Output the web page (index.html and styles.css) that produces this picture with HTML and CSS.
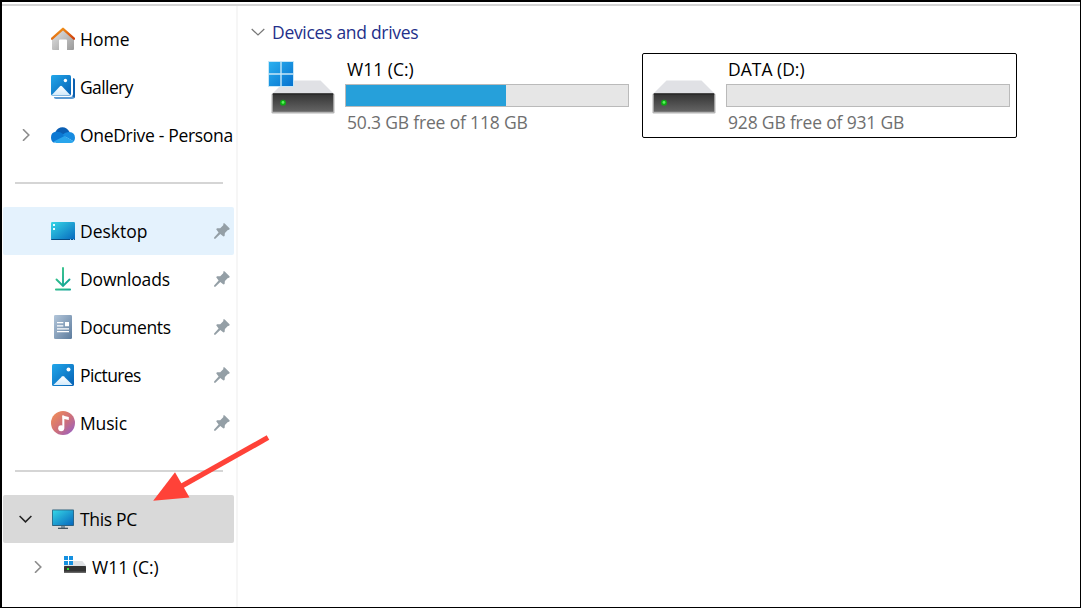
FILE: index.html
```html
<!DOCTYPE html>
<html lang="en">
<head>
  <meta charset="UTF-8">
  <meta name="viewport" content="width=device-width, initial-scale=1.0">
  <title>This PC</title>
  <link rel="stylesheet" href="styles.css">
</head>
<body>

  <!-- shared icons -->
  <svg class="sprite" width="0" height="0" aria-hidden="true">
    <defs>
      <linearGradient id="roof" x1="0" y1="0" x2="1" y2="1">
        <stop offset="0" stop-color="#f7a21b"/>
        <stop offset="1" stop-color="#cf3f0c"/>
      </linearGradient>
      <linearGradient id="wall" x1="0" y1="0" x2="1" y2="1">
        <stop offset="0" stop-color="#e6e6e6"/>
        <stop offset="1" stop-color="#999"/>
      </linearGradient>
      <linearGradient id="blue" x1="0" y1="0" x2="1" y2="1">
        <stop offset="0" stop-color="#22a7ea"/>
        <stop offset="1" stop-color="#0560b4"/>
      </linearGradient>
      <linearGradient id="hill" x1="0" y1="0" x2="0" y2="1">
        <stop offset="0" stop-color="#fff"/>
        <stop offset="1" stop-color="#d4ebfb"/>
      </linearGradient>
      <linearGradient id="screen" x1="0" y1="0" x2="1" y2="1">
        <stop offset="0" stop-color="#35d6e6"/>
        <stop offset="1" stop-color="#0667bd"/>
      </linearGradient>
      <linearGradient id="green" x1="0" y1="0" x2="1" y2="1">
        <stop offset="0" stop-color="#3fca84"/>
        <stop offset="1" stop-color="#0a9f99"/>
      </linearGradient>
      <linearGradient id="paper" x1="0" y1="0" x2="1" y2="1">
        <stop offset="0" stop-color="#b3c6da"/>
        <stop offset="1" stop-color="#5c7b9d"/>
      </linearGradient>
      <linearGradient id="disc" x1="0.1" y1="0.1" x2="0.9" y2="0.9">
        <stop offset="0" stop-color="#ee8a5a"/>
        <stop offset="0.55" stop-color="#cc6f7c"/>
        <stop offset="1" stop-color="#9d62bd"/>
      </linearGradient>
      <linearGradient id="driveFront" x1="0" y1="0" x2="0" y2="1">
        <stop offset="0" stop-color="#333"/>
        <stop offset="1" stop-color="#656565"/>
      </linearGradient>
      <linearGradient id="winTile" x1="0" y1="0" x2="1" y2="1">
        <stop offset="0" stop-color="#2bb0ef"/>
        <stop offset="1" stop-color="#0672cf"/>
      </linearGradient>
    </defs>

    <symbol id="pin" viewBox="0 0 16 16">
      <path d="M9.6.1 10.7.5 15.7 5.5 15.2 6.7 13.9 6.9 10.9 9.9 10.6 13 9.5 13.6 6.3 10.9 1.4 15.7.1 15.8.1 14.4 4.6 9.5 2.2 6.3 3 5.3 6.2 5.2 9.2 2.2Z" fill="#949fa6"/>
    </symbol>

    <symbol id="picture" viewBox="0 0 24 24">
      <rect x="1" y="1" width="22" height="22" rx="1.6" fill="url(#blue)"/>
      <circle cx="17.5" cy="6.5" r="2" fill="#fff"/>
      <path d="M2.4 22.1 11 13.5q1-.9 2 0l8.6 8.6Z" fill="url(#hill)"/>
    </symbol>

    <symbol id="drive" viewBox="0 0 64 34">
      <path d="M14.5.5H49.5L62.5 13.5V15H1.5V13.5Z" fill="#e0e1e5"/>
      <rect x=".5" y="13.5" width="63" height="20" rx="1.2" fill="#b4b4b4"/>
      <rect x="1.8" y="13.6" width="60.4" height="18.2" rx=".6" fill="url(#driveFront)"/>
      <rect x="1.8" y="13.4" width="60.4" height="1.2" fill="#252525"/>
      <circle cx="12" cy="22.7" r="2.9" fill="#0dae13"/>
      <circle cx="12" cy="22.4" r="1.4" fill="#5bf35e"/>
    </symbol>
  </svg>

  <div class="window">
    <div class="topline"></div>

    <div class="explorer">
      <nav class="sidebar">
        <div class="nav-item">
          <span class="expander"></span>
          <svg class="icon" viewBox="0 0 24 24">
            <path d="M1 11.5 12 2 23 11.5V22q0 1-1 1H16V13.5q0-1-1-1H9q-1 0-1 1V23H2q-1 0-1-1Z" fill="url(#wall)"/>
            <path d="M1 11.7 12 1.8 23 11.7" fill="none" stroke="url(#roof)" stroke-width="2.3" stroke-linecap="round" stroke-linejoin="round"/>
          </svg>
          <span class="label">Home</span>
        </div>
        <div class="nav-item">
          <span class="expander"></span>
          <svg class="icon" viewBox="0 0 24 24">
            <path d="M22 3.2q2 .2 2 2V21q0 3-3 3H5q-2 0-2.2-2H19q3 0 3-3Z" fill="#5d9bd3"/>
            <path d="M22 3.2q2 .2 2 2V21q0 1.2-.6 2L21.4 21q.6-.8.6-2Z" fill="#0b60b0"/>
            <rect x="0" y="0" width="20" height="20.5" rx="1.6" fill="url(#blue)"/>
            <circle cx="14.4" cy="5.5" r="1.7" fill="#fff"/>
            <path d="M.8 20 9 11.2q1-.9 2 0L19.2 20Z" fill="url(#hill)"/>
          </svg>
          <span class="label tighter">Gallery</span>
        </div>
        <div class="nav-item">
          <span class="expander">
            <svg class="chevron" viewBox="0 0 12 12"><path d="M3 .2 8.8 6 3 11.8" fill="none" stroke="#8c8c8c" stroke-width="1.6"/></svg>
          </span>
          <svg class="icon" viewBox="0 0 24 24">
            <path d="M4.5 9C6.5 3.2 15.5 2 18.5 9L15 13 6 10Z" fill="#0a5fb4"/>
            <path d="M4.4 8.8Q8.5 8 12 11L15.5 13 3 19.7Q0 18.5 0 14.5 0 9.6 4.4 8.8Z" fill="#0b78d3"/>
            <path d="M18.4 9Q24 9.5 24 15q0 2-1.2 3.4L11.5 12Q14 9 18.4 9Z" fill="#168be0"/>
            <path d="M2.7 18.6 13.5 13 22.9 18.4Q21.5 20 19.5 20H5.5Q3.8 20 2.7 18.6Z" fill="#29a5ec"/>
          </svg>
          <span class="label tight">OneDrive - Persona</span>
        </div>

        <div class="separator"></div>

        <div class="nav-item hovered">
          <span class="expander"></span>
          <svg class="icon" viewBox="0 0 24 24">
            <rect x="0" y="3" width="24" height="18" rx="1.2" fill="url(#screen)"/>
            <path d="M0 20H24Q24 21 23 21H1Q0 21 0 20Z" fill="#074b83"/>
            <path d="M2 5h2v2H2ZM2 9h2v2H2Z" fill="#e5fcff"/>
            <path d="M19 20h1v1h-1ZM22 20h1v1h-1Z" fill="#8ac3e8"/>
          </svg>
          <span class="label">Desktop</span>
          <svg class="pin"><use href="#pin"/></svg>
        </div>
        <div class="nav-item">
          <span class="expander"></span>
          <svg class="icon" viewBox="0 0 24 24">
            <path d="M12 1V18.6M5.5 12.5 12 19 18.5 12.5" fill="none" stroke="url(#green)" stroke-width="1.9" stroke-linecap="round"/>
            <rect x="4" y="21.5" width="16" height="2" rx=".8" fill="url(#green)"/>
          </svg>
          <span class="label snug">Downloads</span>
          <svg class="pin"><use href="#pin"/></svg>
        </div>
        <div class="nav-item">
          <span class="expander"></span>
          <svg class="icon" viewBox="0 0 24 24">
            <rect x="3" y="0" width="18" height="24" rx="1.3" fill="url(#paper)"/>
            <path d="M6 7h6.3v1.3H6ZM6 10.2h6.3v1.3H6ZM14 7h4v4.2h-4ZM6 13.3h12v1.3H6ZM6 16h12v1.3H6Z" fill="#fff"/>
          </svg>
          <span class="label tight">Documents</span>
          <svg class="pin"><use href="#pin"/></svg>
        </div>
        <div class="nav-item">
          <span class="expander"></span>
          <svg class="icon"><use href="#picture"/></svg>
          <span class="label tighter">Pictures</span>
          <svg class="pin"><use href="#pin"/></svg>
        </div>
        <div class="nav-item">
          <span class="expander"></span>
          <svg class="icon" viewBox="0 0 24 24">
            <circle cx="12" cy="12" r="12" fill="url(#disc)"/>
            <path d="M11.3 4.5 17.8 6V9L13.2 8V17.2" fill="#fff"/>
            <circle cx="10.2" cy="17.2" r="3" fill="#fff"/>
            <path d="M11.3 4.5h1.9V17.2h-1.9Z" fill="#fff"/>
          </svg>
          <span class="label snug">Music</span>
          <svg class="pin"><use href="#pin"/></svg>
        </div>

        <div class="separator"></div>

        <div class="nav-item selected">
          <span class="expander">
            <svg class="chevron down" viewBox="0 0 13 8"><path d="M.6 1 6.5 6.9 12.4 1" fill="none" stroke="#222" stroke-width="1.5"/></svg>
          </span>
          <svg class="icon" viewBox="0 0 24 24">
            <rect x="1" y="2.6" width="22" height="16.4" rx=".8" fill="#2e627f"/>
            <rect x="1.8" y="3.4" width="20.4" height="14.6" fill="url(#screen)"/>
            <path d="M10 19h4v2h-4Z" fill="#7e929e"/>
            <path d="M7 20.7H17V22H7Z" fill="#44545f"/>
          </svg>
          <span class="label tight">This PC</span>
        </div>
        <div class="nav-item child">
          <span class="expander">
            <svg class="chevron" viewBox="0 0 12 12"><path d="M3 .2 8.8 6 3 11.8" fill="none" stroke="#8c8c8c" stroke-width="1.6"/></svg>
          </span>
          <svg class="icon" viewBox="0 0 24 24">
            <path d="M10 6H19.3L23 10.5V11H1V9H10Z" fill="#dfe1e4"/>
            <rect x="1" y="11" width="22" height="7" rx=".5" fill="#333"/>
            <rect x="1" y="16.6" width="22" height="1.4" fill="#666"/>
            <rect x="4" y="13" width="2" height="2" fill="#2edc35"/>
            <path d="M1 1h4v4H1ZM6 1h4v4H6ZM1 6h4v4H1ZM6 6h4v4H6Z" fill="#1590e0"/>
          </svg>
          <span class="label">W11 (C:)</span>
        </div>
      </nav>

      <main class="content">
        <h2 class="group-title">
          <svg class="group-chevron" viewBox="0 0 14 8"><path d="M.7 1 7 7 13.3 1" fill="none" stroke="#777" stroke-width="1.2"/></svg>
          <span>Devices and drives</span>
        </h2>

        <div class="drives">
          <div class="drive">
            <svg class="drive-icon" viewBox="0 0 70 56">
              <use href="#drive" x="5" y="20" width="64" height="34"/>
              <rect x="2" y="1" width="26" height="26" fill="#c8e7f7"/>
              <path d="M3 2H14.3V13.3H3ZM15.7 2H27V13.3H15.7ZM3 14.7H14.3V26H3ZM15.7 14.7H27V26H15.7Z" fill="url(#winTile)"/>
            </svg>
            <div class="drive-info">
              <span class="drive-name">W11 (C:)</span>
              <div class="meter"><div class="meter-fill" style="width: 56.8%"></div></div>
              <span class="drive-space">50.3 GB free of 118 GB</span>
            </div>
          </div>
          <div class="drive focused">
            <svg class="drive-icon" viewBox="0 0 70 56">
              <use href="#drive" x="5" y="20" width="64" height="34"/>
            </svg>
            <div class="drive-info">
              <span class="drive-name">DATA (D:)</span>
              <div class="meter"></div>
              <span class="drive-space">928 GB free of 931 GB</span>
            </div>
          </div>
        </div>
      </main>
    </div>

    <!-- red pointer over the This PC row -->
    <svg class="arrow" viewBox="0 0 122 72">
      <path d="M118 5.6 30 55" stroke="#ff4238" stroke-width="5.2" fill="none"/>
      <path d="M3.2 68.7 25 40.2 39.5 65.6Z" fill="#ff4238"/>
    </svg>
  </div>

</body>
</html>
```
FILE: styles.css
```css
* {
  box-sizing: border-box;
}

body {
  margin: 0;
  font-family: "Open Sans", "Noto Sans", sans-serif;
  font-size: 17.5px;
  color: #000;
  background: #fff;
}

.sprite {
  position: absolute;
}

.window {
  position: relative;
  height: 608px;
  display: flex;
  flex-direction: column;
  border: solid #000;
  border-width: 2px 1px 1px 2px;
  overflow: hidden;
}

.topline {
  height: 2px;
  margin-top: 2px;
  background: #d5d5d5;
  flex-shrink: 0;
}

.explorer {
  flex: 1;
  display: flex;
}

/* sidebar */
.sidebar {
  width: 236px;
  padding: 9px 2px 0 1px;
  border-right: 2px solid #f6f6f6;
  flex-shrink: 0;
}

.nav-item {
  display: flex;
  align-items: center;
  width: 231px;
  height: 48px;
  padding-right: 4px;
  border-radius: 2px;
  white-space: nowrap;
}

.nav-item.hovered {
  background: #e4f2fd;
}

.nav-item.selected {
  background: #d9d9d9;
}

.nav-item.child {
  padding-left: 12px;
}

.expander {
  width: 45px;
  display: flex;
  justify-content: center;
  margin-right: 3px;
  flex-shrink: 0;
}

.chevron {
  width: 12px;
  height: 12px;
}

.chevron.down {
  width: 13px;
  height: 8px;
}

.icon {
  width: 24px;
  height: 24px;
  margin-right: 5px;
  flex-shrink: 0;
}

.label {
  flex: 1;
}

.label.snug {
  letter-spacing: -0.15px;
}

.label.tight {
  letter-spacing: -0.32px;
}

.label.tighter {
  letter-spacing: -0.6px;
}

.pin {
  width: 16px;
  height: 16px;
  flex-shrink: 0;
}

.separator {
  height: 48px;
  padding: 23px 11px 0 12px;
}

.separator::before {
  content: "";
  display: block;
  height: 2px;
  background: #d5d5d5;
}

/* drives */
.content {
  flex: 1;
  padding: 13px 0 0 13px;
}

.group-title {
  display: flex;
  align-items: center;
  gap: 7px;
  height: 26px;
  margin: 0 0 8px;
  font-size: 17.5px;
  font-weight: 400;
  letter-spacing: -0.3px;
  color: #24308a;
}

.group-chevron {
  width: 14px;
  height: 8px;
}

.drives {
  display: flex;
  gap: 6px;
  padding-left: 10px;
}

.drive {
  display: flex;
  width: 375px;
  height: 85px;
  border: 1px solid transparent;
  border-radius: 2px;
}

.drive.focused {
  border-color: #000;
}

.drive-icon {
  width: 70px;
  height: 56px;
  margin: 6px 0 0 4px;
}

.drive-info {
  margin-left: 9px;
  width: 284px;
  white-space: nowrap;
}

.drive-name,
.drive-space {
  display: block;
  height: 24px;
  line-height: 24px;
  padding-left: 2px;
}

.drive-name {
  margin: 3px 0;
}

.drive-space {
  margin-top: 3px;
  letter-spacing: -0.18px;
  color: #6f6f6f;
}

.meter {
  height: 23px;
  border: 1px solid #bababa;
  background: #e6e6e6;
}

.meter-fill {
  height: 100%;
  background: #26a0da;
}

.arrow {
  position: absolute;
  left: 148px;
  top: 430px;
  width: 122px;
  height: 72px;
}
```
